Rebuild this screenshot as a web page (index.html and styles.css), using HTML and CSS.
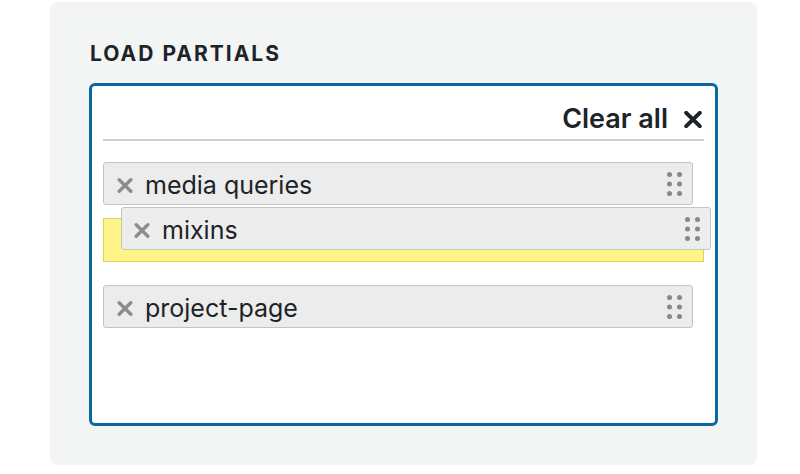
FILE: index.html
```html
<!DOCTYPE html>
<html lang="en">
<head>
<meta charset="utf-8">
<title>Load partials</title>
<link rel="stylesheet" href="styles.css">
</head>
<body>
<section class="panel">
  <h2 class="title">LOAD PARTIALS</h2>
  <div class="box">
    <div class="toolbar">
      <button class="clear" type="button">Clear all
        <svg class="clear-icon" width="18" height="17" viewBox="0 0 18 17"><path d="M2.2 1.8 L15.8 15.2 M15.8 1.8 L2.2 15.2" stroke="#1d2327" stroke-width="4" stroke-linecap="round" fill="none"/></svg>
      </button>
    </div>
    <ul class="list">
      <li class="tag">
        <svg class="remove" width="16" height="15" viewBox="0 0 16 15"><path d="M2.2 1.8 L13.8 13.2 M13.8 1.8 L2.2 13.2" stroke="#8c8c8c" stroke-width="3.4" stroke-linecap="round" fill="none"/></svg>
        <span class="label">media queries</span>
        <svg class="handle" width="15" height="24" viewBox="0 0 15 24"><g fill="#888"><circle cx="2.5" cy="2.5" r="2.5"/><circle cx="12.5" cy="2.5" r="2.5"/><circle cx="2.5" cy="12" r="2.5"/><circle cx="12.5" cy="12" r="2.5"/><circle cx="2.5" cy="21.5" r="2.5"/><circle cx="12.5" cy="21.5" r="2.5"/></g></svg>
      </li>
      <li class="placeholder">
        <div class="tag dragging">
          <svg class="remove" width="16" height="15" viewBox="0 0 16 15"><path d="M2.2 1.8 L13.8 13.2 M13.8 1.8 L2.2 13.2" stroke="#8c8c8c" stroke-width="3.4" stroke-linecap="round" fill="none"/></svg>
          <span class="label">mixins</span>
          <svg class="handle" width="15" height="24" viewBox="0 0 15 24"><g fill="#888"><circle cx="2.5" cy="2.5" r="2.5"/><circle cx="12.5" cy="2.5" r="2.5"/><circle cx="2.5" cy="12" r="2.5"/><circle cx="12.5" cy="12" r="2.5"/><circle cx="2.5" cy="21.5" r="2.5"/><circle cx="12.5" cy="21.5" r="2.5"/></g></svg>
        </div>
      </li>
      <li class="tag">
        <svg class="remove" width="16" height="15" viewBox="0 0 16 15"><path d="M2.2 1.8 L13.8 13.2 M13.8 1.8 L2.2 13.2" stroke="#8c8c8c" stroke-width="3.4" stroke-linecap="round" fill="none"/></svg>
        <span class="label">project-page</span>
        <svg class="handle" width="15" height="24" viewBox="0 0 15 24"><g fill="#888"><circle cx="2.5" cy="2.5" r="2.5"/><circle cx="12.5" cy="2.5" r="2.5"/><circle cx="2.5" cy="12" r="2.5"/><circle cx="12.5" cy="12" r="2.5"/><circle cx="2.5" cy="21.5" r="2.5"/><circle cx="12.5" cy="21.5" r="2.5"/></g></svg>
      </li>
    </ul>
  </div>
</section>
</body>
</html>
```
FILE: styles.css
```css
html, body {
  margin: 0;
  padding: 0;
  background: #ffffff;
}
body {
  font-family: Inter, "Liberation Sans", sans-serif;
  color: #1d2327;
  padding-top: 2px;
}
.panel {
  margin-left: 50px;
  width: 707px;
  box-sizing: border-box;
  padding: 39px 39px 39px;
  background: #f3f4f4;
  border-radius: 8px;
}
.title {
  margin: 0 0 17px 1px;
  font-size: 21px;
  line-height: 25px;
  font-weight: 700;
  letter-spacing: 2px;
  color: #1d2327;
}
.box {
  height: 343px;
  box-sizing: border-box;
  border: 3px solid #0a68a0;
  border-radius: 6px;
  background: #ffffff;
  padding: 0 11px;
}
.toolbar {
  display: flex;
  justify-content: flex-end;
  padding: 16px 2px 4px 0;
  border-bottom: 2px solid #d0d0d0;
}
.clear {
  display: flex;
  align-items: center;
  gap: 16px;
  border: 0;
  background: none;
  padding: 0;
  font-family: inherit;
  font-size: 27px;
  line-height: 33px;
  font-weight: 600;
  color: #1d2327;
}
.clear-icon {
  margin-top: 1px;
}
.list {
  list-style: none;
  margin: 21px 0 0;
  padding: 0;
}
.tag {
  display: flex;
  align-items: center;
  box-sizing: border-box;
  width: 590px;
  height: 43px;
  padding: 3px 10px 0 13px;
  background: #ececec;
  border: 1px solid #c4c4c4;
  border-radius: 3px;
  font-size: 25px;
}
.remove {
  flex: none;
  margin-right: 12px;
}
.label {
  flex: 1;
  line-height: 30px;
  color: #1d2327;
}
.handle {
  flex: none;
  margin-top: -3px;
}
.placeholder {
  position: relative;
  height: 44px;
  box-sizing: border-box;
  margin: 13px 0 23px;
  background: #fdf587;
  border: 1px solid #dcd055;
}
.dragging {
  position: absolute;
  left: 17px;
  top: -12px;
  padding-left: 12px;
  background: #ededed;
}
```
